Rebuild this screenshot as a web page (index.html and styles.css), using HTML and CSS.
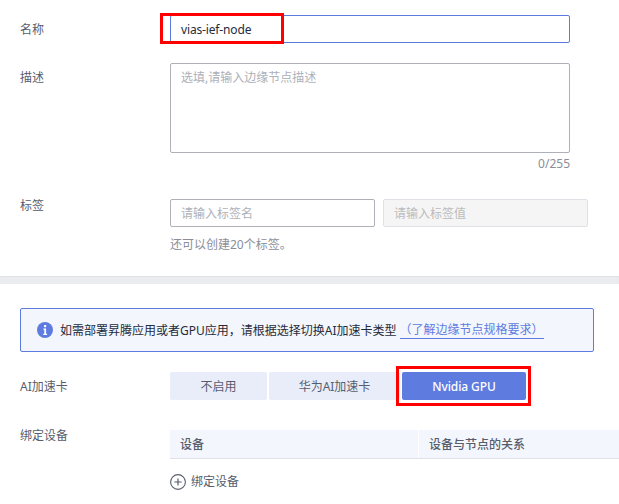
FILE: index.html
```html
<!DOCTYPE html>
<html lang="zh">
<head>
<meta charset="utf-8">
<title>边缘节点</title>
<link rel="stylesheet" href="styles.css">
</head>
<body>
<section class="top">
  <div class="row row-name">
    <div class="label">名称</div>
    <div class="field">
      <div class="input input-focus">vias-ief-node</div>
      <div class="mark mark-name"></div>
    </div>
  </div>
  <div class="row row-desc">
    <div class="label">描述</div>
    <div class="field">
      <div class="textarea">选填,请输入边缘节点描述</div>
      <div class="counter">0/255</div>
    </div>
  </div>
  <div class="row row-tags">
    <div class="label">标签</div>
    <div class="field">
      <div class="tag-inputs">
        <div class="input input-key placeholder">请输入标签名</div>
        <div class="input input-value">请输入标签值</div>
      </div>
      <div class="hint">还可以创建20个标签。</div>
    </div>
  </div>
</section>
<div class="band"></div>
<section class="bottom">
  <div class="alert">
    <svg class="info" viewBox="0 0 16 16" width="16" height="16" aria-hidden="true">
      <circle cx="8" cy="8" r="8" fill="#5e7ce0"/>
      <rect x="7" y="3" width="2.2" height="2.2" rx="0.6" fill="#fff"/>
      <path d="M6.4 6.6h2.7v5.2h1v1.2H6.2v-1.2h1.1V7.8H6.4z" fill="#fff"/>
    </svg>
    <span class="alert-text">如需部署昇腾应用或者GPU应用，请根据选择切换AI加速卡类型</span>
    <a class="alert-link">（了解边缘节点规格要求）</a>
  </div>
  <div class="row row-ai">
    <div class="label">AI加速卡</div>
    <div class="field">
      <div class="segments">
        <div class="seg seg-off">不启用</div>
        <div class="seg seg-hw">华为AI加速卡</div>
        <div class="seg seg-on">Nvidia GPU<span class="mark mark-gpu"></span></div>
      </div>
    </div>
  </div>
  <div class="row row-bind">
    <div class="label">绑定设备</div>
    <div class="field">
      <div class="thead">
        <div class="th th-device">设备</div>
        <div class="th th-rel">设备与节点的关系</div>
      </div>
      <div class="add">
        <svg viewBox="0 0 16 16" width="16" height="16" aria-hidden="true">
          <circle cx="8" cy="8" r="7.4" fill="none" stroke="#575d6c" stroke-width="1.1"/>
          <path d="M8 4.4v7.2M4.4 8h7.2" fill="none" stroke="#575d6c" stroke-width="1.2"/>
        </svg>
        <span>绑定设备</span>
      </div>
    </div>
  </div>
</section>
</body>
</html>
```
FILE: styles.css
```css
* { box-sizing: border-box; }
html, body { margin: 0; padding: 0; }
body {
  width: 619px;
  height: 504px;
  overflow: hidden;
  background: #fff;
  color: #252b3a;
  font-family: "Noto Sans", "Noto Sans CJK SC", sans-serif;
  font-size: 12px;
  line-height: 18px;
}
.top { height: 276px; padding-top: 15px; }
.band { height: 8px; background: #ebecf0; box-shadow: inset 0 1px 1px #dfe1e6; }
.bottom { padding: 24px 0 0 20px; height: 220px; overflow: hidden; }
.row { display: flex; padding-left: 20px; }
.bottom .row { padding-left: 0; }
.label { width: 150px; flex: none; color: #575d6c; padding-top: 6px; }
.field { position: relative; flex: 1; min-width: 0; }
.input {
  height: 28px;
  border: 1px solid #adb0b8;
  border-radius: 2px;
  padding: 5px 10px 0;
}
.input-focus { width: 400px; border-color: #5e7ce0; letter-spacing: -0.15px; }
.row-desc { margin-top: 20px; }
.textarea {
  width: 400px;
  height: 90px;
  border: 1px solid #adb0b8;
  border-radius: 2px;
  padding: 5px 10px 0;
  color: #adb0b8;
}
.counter { width: 400px; text-align: right; color: #8a8e99; height: 20px; line-height: 20px; padding-top: 1px; }
.row-tags { margin-top: 26px; }
.row-tags .label { margin-top: -2px; padding-top: 0; }
.tag-inputs { display: flex; gap: 8px; }
.input-key { width: 205px; }
.placeholder { color: #adb0b8; }
.input-value { width: 205px; background: #f5f5f6; border-color: #dfe1e6; color: #bbb; }
.hint { margin-top: 9px; color: #8a8e99; }
.alert {
  display: flex;
  align-items: center;
  width: 574px;
  height: 44px;
  padding-left: 16px;
  background: #f3f6fd;
  border: 1px solid #5e7ce0;
  border-radius: 2px;
}
.info { flex: none; margin-right: 7px; }
.alert-text { padding-top: 1px; }
.alert-link { color: #5e7ce0; border-bottom: 1px solid #5e7ce0; margin-left: 3px; line-height: 16px; padding-top: 1px; }
.row-ai { margin-top: 20px; }
.segments { display: flex; gap: 2px; }
.seg {
  position: relative;
  height: 28px;
  line-height: 29px;
  text-align: center;
  background: #e9edfa;
  color: #575d6c;
  border-radius: 2px;
}
.seg-off { width: 97px; }
.seg-hw { width: 131px; }
.seg-on { width: 124px; background: #5e7ce0; color: #fff; font-weight: 500; letter-spacing: -0.1px; }
.row-bind { margin-top: 30px; }
.row-bind .label { margin-top: -3px; padding-top: 0; }
.thead { display: flex; width: 449px; height: 29px; background: #f3f6fd; border-bottom: 1px solid #dfe1e6; }
.th { line-height: 30px; padding-left: 10px; color: #575d6c; font-weight: 500; }
.th-device { width: 249px; border-right: 1px solid #fff; }
.th-rel { flex: 1; }
.add { display: flex; align-items: center; gap: 5px; margin-top: 14px; color: #575d6c; }
.mark { position: absolute; border: 3px solid #f00; }
.mark-name { left: -10px; top: -2px; width: 124px; height: 31px; }
.mark-gpu { left: -6px; top: -6px; width: 135px; height: 40px; }
```
